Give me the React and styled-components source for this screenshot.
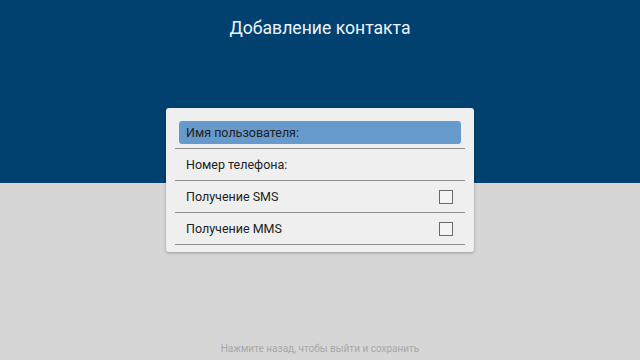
import React from 'react';
import styled, { createGlobalStyle } from 'styled-components';

const GlobalStyle = createGlobalStyle`
  html, body {
    margin: 0;
    padding: 0;
  }
  body {
    font-family: Roboto, 'Liberation Sans', sans-serif;
  }
`;

const rows = [
  { label: 'Имя пользователя:', active: true },
  { label: 'Номер телефона:' },
  { label: 'Получение SMS', checkbox: true },
  { label: 'Получение MMS', checkbox: true },
];

const App = () => {
  return (
    <Screen>
      <GlobalStyle />
      <Title>Добавление контакта</Title>
      <Card>
        {rows.map((row) => (
          <Row key={row.label}>
            <RowInner active={row.active}>
              <Label>{row.label}</Label>
              {row.checkbox && <Checkbox />}
            </RowInner>
          </Row>
        ))}
      </Card>
      <Hint>Нажмите назад, чтобы выйти и сохранить</Hint>
    </Screen>
  );
};

export default App;

const Screen = styled.div`
  width: 640px;
  height: 360px;
  display: flex;
  flex-direction: column;
  align-items: center;
  background: linear-gradient(#01416f 0, #01416f 183px, #d6d6d6 183px);
  box-sizing: border-box;
  padding-bottom: 4px;
  overflow: hidden;
`;

const Title = styled.h1`
  margin: 16px 0 0;
  font-weight: 400;
  font-size: 17.6px;
  line-height: 24px;
  color: #eef3f8;
`;

const Card = styled.div`
  margin-top: 68px;
  width: 308px;
  height: 144px;
  box-sizing: border-box;
  padding: 9px 9px 0;
  background-color: #efefef;
  border-radius: 3px;
  box-shadow: 0 1px 3px rgba(0, 0, 0, 0.3);
`;

const Row = styled.div`
  height: 31px;
  border-bottom: 1px solid #8f8f8f;
  display: flex;
`;

const RowInner = styled.div`
  flex: 1;
  margin: 4px;
  padding: 0 8px 0 7px;
  display: flex;
  align-items: center;
  justify-content: space-between;
  border-radius: 3px;
  background-color: ${(props) => (props.active ? '#6699cc' : 'transparent')};
`;

const Label = styled.span`
  font-size: 12.5px;
  color: #222;
`;

const Checkbox = styled.span`
  width: 12px;
  height: 12px;
  border: 1.5px solid #6a6a6a;
  background-color: #f4f4f4;
`;

const Hint = styled.div`
  margin-top: auto;
  font-size: 10px;
  line-height: 14px;
  color: #a8a8a8;
`;
